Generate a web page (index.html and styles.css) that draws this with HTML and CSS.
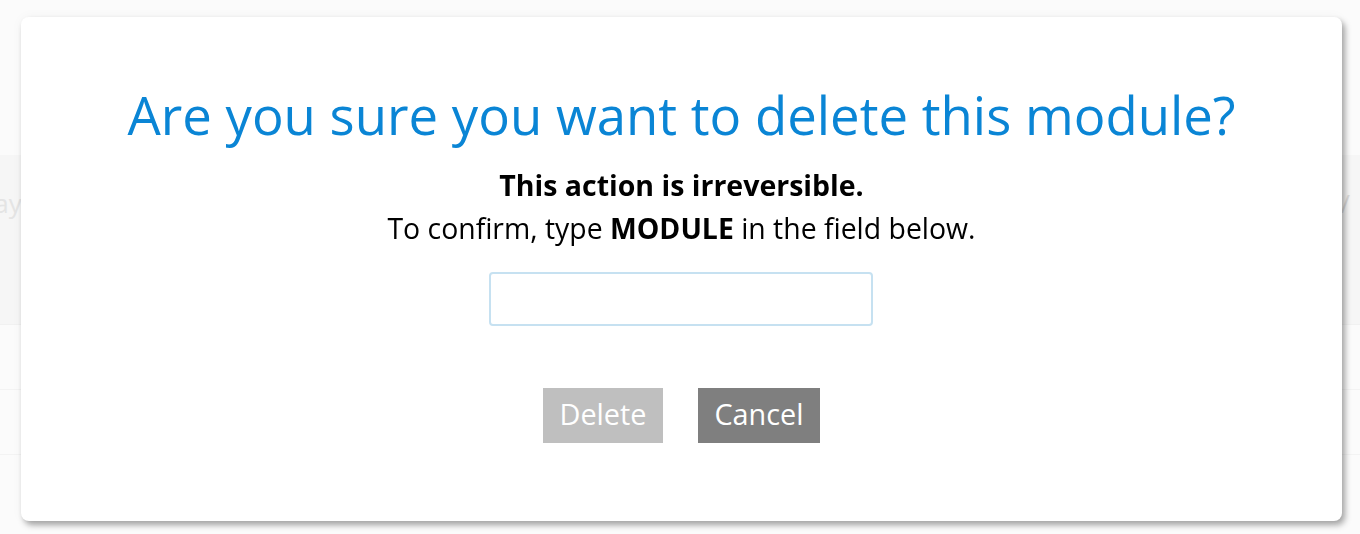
FILE: index.html
```html
<!DOCTYPE html>
<html lang="en">
<head>
<meta charset="utf-8">
<title>Delete module</title>
<link rel="stylesheet" href="styles.css">
</head>
<body>
<div class="page">
  <div class="page-top"></div>
  <div class="page-band">
    <span class="band-text">Display</span>
    <span class="band-chevron">/</span>
  </div>
  <div class="page-row"></div>
  <div class="page-row"></div>
</div>

<div class="overlay">
  <div class="modal">
    <h1 class="modal-title">Are you sure you want to delete this module?</h1>
    <p class="modal-warning">This action is irreversible.</p>
    <p class="modal-text">To confirm, type <strong>MODULE</strong> in the field below.</p>
    <input class="modal-input" type="text" aria-label="Confirmation">
    <div class="modal-actions">
      <button class="btn btn-delete" disabled>Delete</button>
      <button class="btn btn-cancel">Cancel</button>
    </div>
  </div>
</div>
</body>
</html>
```

FILE: styles.css
```css
* { box-sizing: border-box; }
html, body { margin: 0; padding: 0; }
body {
  font-family: "Open Sans", "Noto Sans", sans-serif;
  background: #fbfbfb;
  width: 1360px;
  height: 534px;
  overflow: hidden;
}

.page { display: flex; flex-direction: column; }
.page-top { height: 155px; }
.page-band {
  height: 170px;
  background: #f6f6f6;
  display: flex;
  justify-content: space-between;
  padding: 30px 0 0 0;
  border-bottom: 1px solid #f1f1f1;
}
.band-text {
  font-size: 26px;
  color: #e4e4e4;
  margin-left: -66px;
}
.band-chevron {
  font-size: 26px;
  color: #dcdcdc;
  margin-right: 10px;
}
.page-row { height: 65px; border-bottom: 1px solid #f3f3f3; }

.overlay {
  position: fixed;
  inset: 0;
}
.modal {
  position: absolute;
  left: 21px;
  top: 17px;
  width: 1321px;
  height: 504px;
  background: #fff;
  border-radius: 8px;
  box-shadow: 3px 4px 6px rgba(0,0,0,0.35), 0 0 12px rgba(0,0,0,0.04);
  display: flex;
  flex-direction: column;
  align-items: center;
  padding-top: 61px;
}
.modal-title {
  margin: 0;
  font-weight: 400;
  font-size: 52.7px;
  line-height: 74px;
  color: #0a85d5;
}
.modal-warning {
  margin: 14px 0 0;
  font-weight: 700;
  font-size: 28.5px;
  line-height: 38px;
  color: #000;
}
.modal-text {
  margin: 5px 0 0;
  font-size: 28.4px;
  line-height: 38px;
  color: #000;
}
.modal-text strong { font-weight: 700; }
.modal-input {
  margin-top: 25px;
  margin-left: -2px;
  width: 384px;
  height: 54px;
  border: 2px solid #c6e1f1;
  border-radius: 4px;
  background: #fff;
  outline: none;
}
.modal-actions {
  margin-top: 62px;
  display: flex;
  gap: 35px;
}
.btn {
  font-family: "Open Sans", "Noto Sans", sans-serif;
  font-size: 28.8px;
  height: 55px;
  border: none;
  border-radius: 0;
  color: #fff;
  padding: 0 0 4px;
}
.btn-delete { background: #bfbfbf; width: 120px; }
.btn-cancel { background: #7f7f7f; width: 122px; }
```
